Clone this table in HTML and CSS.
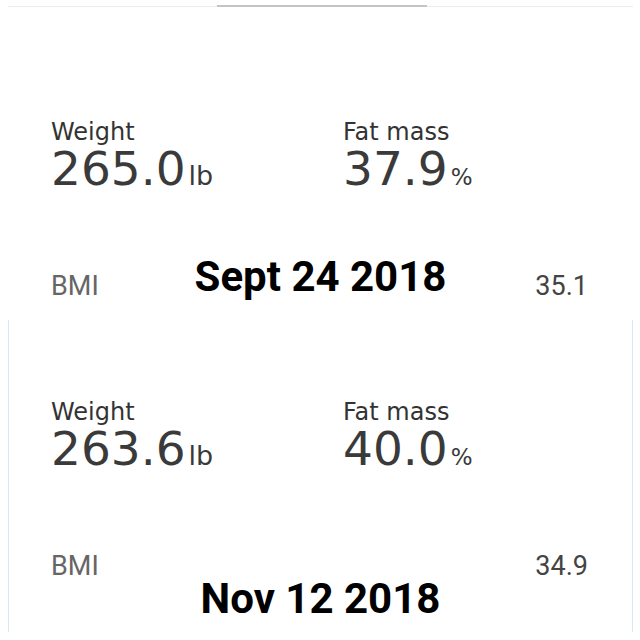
FILE: index.html
```html
<!DOCTYPE html>
<html lang="en">
<head>
  <meta charset="UTF-8">
  <title>Weight progress</title>
  <meta name="viewport" content="width=device-width, initial-scale=1.0">
  <link rel="stylesheet" href="styles.css">
</head>
<body>

<div class="screen">
  <div class="tab-bar"><span class="tab-active"></span></div>

  <section class="card card-first">
    <div class="metrics">
      <div class="metric">
        <div class="metric-label">Weight</div>
        <div class="metric-value">265.0<span class="unit">lb</span></div>
      </div>
      <div class="metric">
        <div class="metric-label">Fat mass</div>
        <div class="metric-value">37.9<span class="unit unit-pct">%</span></div>
      </div>
    </div>
    <div class="bmi-row">
      <span class="bmi-label">BMI</span>
      <span class="bmi-value">35.1</span>
    </div>
    <p class="date-caption">Sept 24 2018</p>
  </section>

  <section class="card card-second">
    <div class="metrics">
      <div class="metric">
        <div class="metric-label">Weight</div>
        <div class="metric-value">263.6<span class="unit">lb</span></div>
      </div>
      <div class="metric">
        <div class="metric-label">Fat mass</div>
        <div class="metric-value">40.0<span class="unit unit-pct">%</span></div>
      </div>
    </div>
    <div class="bmi-row">
      <span class="bmi-label">BMI</span>
      <span class="bmi-value">34.9</span>
    </div>
    <p class="date-caption">Nov 12 2018</p>
  </section>
</div>

</body>
</html>
```

FILE: styles.css
```css
* {
  margin: 0;
  padding: 0;
  box-sizing: border-box;
}

body {
  background: #ffffff;
  color: #333333;
  font-family: 'DejaVu Sans', sans-serif;
}

.screen {
  width: 640px;
  height: 640px;
  padding: 0 7px 8px 8px;
  overflow: hidden;
}

/* barre d'onglets en haut */
.tab-bar {
  height: 7px;
  border-bottom: 1px solid #ececec;
  display: flex;
  padding-left: 209px;
}

.tab-active {
  width: 210px;
  height: 2px;
  margin-top: 5px;
  background: #c4c4c4;
}

.card {
  position: relative;
  padding: 0 44px 0 42px;
  border-left: 1px solid transparent;
  border-right: 1px solid transparent;
}

.card-first {
  height: 313px;
  padding-top: 112px;
}

.card-second {
  height: 312px;
  padding-top: 79px;
  border-left-color: #d3eaee;
  border-right-color: #d3eaee;
}

.metrics {
  display: grid;
  grid-template-columns: 292px 1fr;
}

.metric-label {
  font-size: 24px;
  line-height: 26px;
  color: #333;
}

.metric-value {
  font-size: 47px;
  line-height: 48px;
  color: #3a3a3a;
}

.unit {
  font-size: 27px;
  line-height: 0;
  margin-left: 3px;
}

.unit-pct {
  font-size: 23px;
}

.bmi-row {
  margin-top: 78px;
  display: flex;
  justify-content: space-between;
  font-family: 'Roboto', sans-serif;
  font-size: 27px;
  line-height: 30px;
}

.bmi-label {
  color: #666;
}

.bmi-value {
  color: #444;
}

/* légende ajoutée par-dessus la capture */
.date-caption {
  position: absolute;
  left: 0;
  right: 0;
  text-align: center;
  font-family: 'Roboto', sans-serif;
  font-weight: bold;
  font-size: 42px;
  line-height: 42px;
  color: #000;
}

.card-first .date-caption {
  top: 249px;
}

.card-second .date-caption {
  top: 258px;
}
```
